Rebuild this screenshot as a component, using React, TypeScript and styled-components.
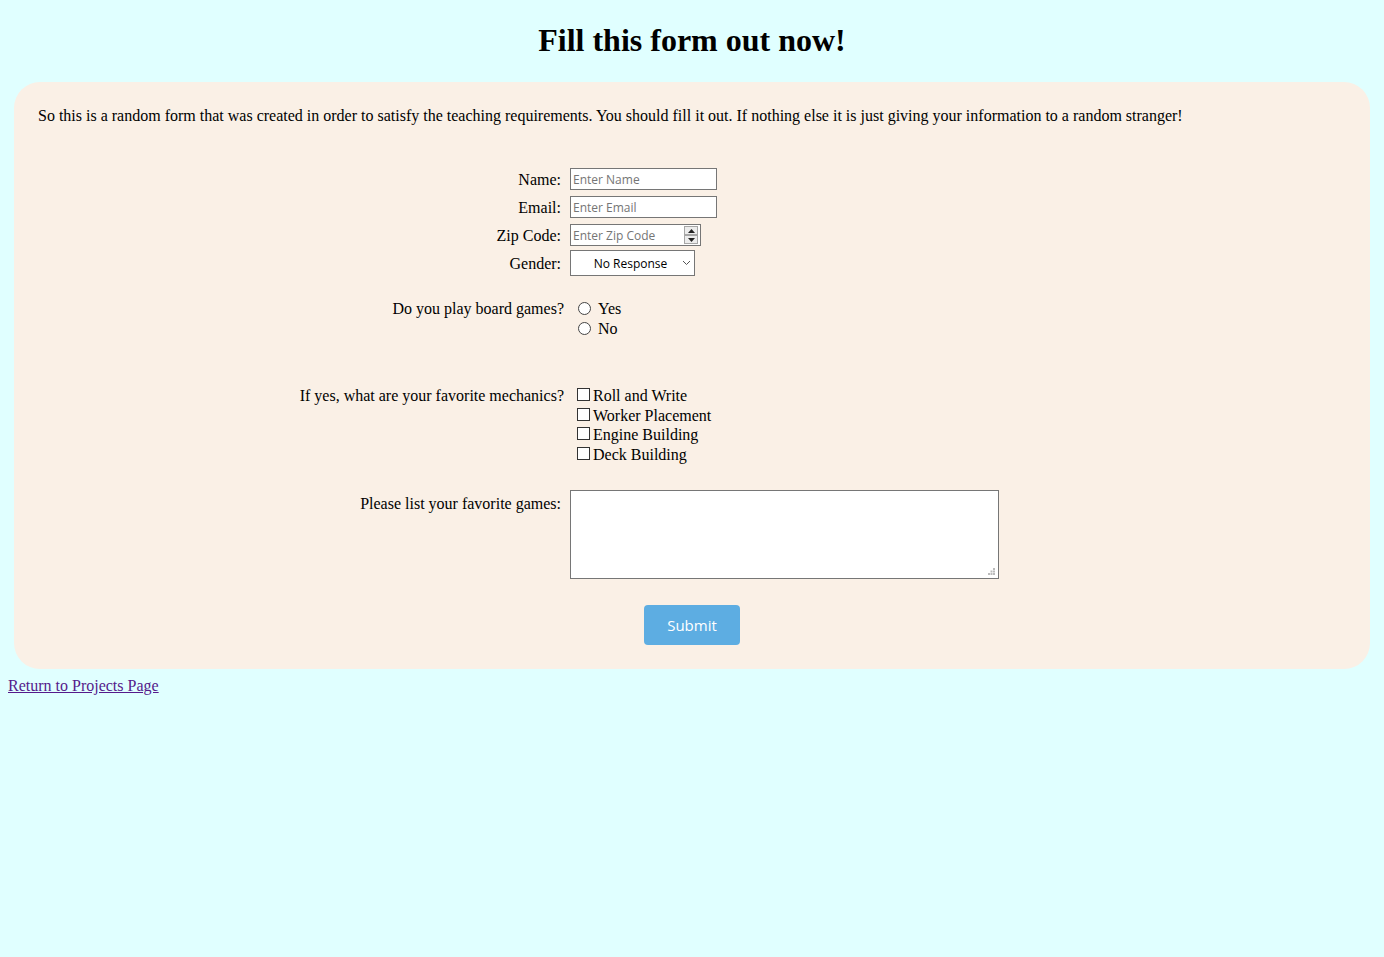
import React from "react";
import styled, { createGlobalStyle } from "styled-components";

const Global = createGlobalStyle`
  html, body { margin: 0; padding: 0; background: #e0ffff; }
  body { font-family: "Liberation Serif", "Times New Roman", serif; font-size: 16px; color: #000; }
`;

const Page = styled.div`
  padding: 0 8px;
  min-height: 957px;
  box-sizing: border-box;
`;

const Title = styled.h1`
  margin: 22px 0 23px;
  font-size: 32px;
  line-height: 37px;
  font-weight: bold;
  text-align: center;
`;

const Card = styled.div`
  margin: 0 6px;
  background: #faf0e6;
  border-radius: 26px;
  padding: 25px 24px 24px;
`;

const Intro = styled.p`
  margin: 0 0 43px;
  line-height: 18px;
`;

const Form = styled.form`
  display: flex;
  flex-direction: column;
`;

const Row = styled.div<{ $choice?: boolean; $mt?: number; $top?: boolean }>`
  display: grid;
  grid-template-columns: ${(p) => (p.$choice ? 526 : 523)}px 1fr;
  column-gap: 9px;
  align-items: ${(p) => (p.$top ? "start" : "center")};
  margin-top: ${(p) => p.$mt ?? 0}px;
`;

const Label = styled.label<{ $pt?: number }>`
  text-align: right;
  line-height: 18px;
  padding-top: ${(p) => p.$pt ?? 2}px;
`;

const TextInput = styled.input<{ $w: number }>`
  box-sizing: border-box;
  width: ${(p) => p.$w}px;
  height: 22px;
  border: 1px solid #767676;
  background: #fff;
  padding: 0 2px;
  font-family: "Open Sans", "Liberation Sans", sans-serif;
  font-size: 12px;
  color: #000;
  outline: none;
  &::placeholder { color: #757575; }
  &::-webkit-inner-spin-button, &::-webkit-outer-spin-button { -webkit-appearance: none; margin: 0; }
  -moz-appearance: textfield;
`;

const FieldWrap = styled.div`
  position: relative;
  width: max-content;
`;

const Spinner = styled.div`
  position: absolute;
  right: 3px;
  top: 2px;
  width: 14px;
  height: 18px;
  display: flex;
  flex-direction: column;
`;

const SpinBtn = styled.div`
  flex: 1;
  box-sizing: border-box;
  border: 1px solid #a6a6a6;
  background: #ececec;
  display: flex;
  align-items: center;
  justify-content: center;
`;

const SelectBox = styled.select`
  box-sizing: border-box;
  width: 125px;
  height: 26px;
  appearance: none;
  -webkit-appearance: none;
  border: 1px solid #767676;
  border-radius: 0;
  background: #fff;
  padding: 0 14px 0 10px;
  text-align: center;
  text-align-last: center;
  font-family: "Open Sans", "Liberation Sans", sans-serif;
  font-size: 12px;
  color: #000;
  outline: none;
`;

const Chevron = styled.svg`
  position: absolute;
  right: 4px;
  top: 10px;
  pointer-events: none;
`;

const Options = styled.div<{ $h: number }>`
  display: flex;
  flex-direction: column;
  & > label { height: ${(p) => p.$h}px; }
`;

const Option = styled.label`
  display: flex;
  align-items: center;
  line-height: 18px;
`;

const OptionText = styled.span`
  padding-top: 2px;
`;

const Radio = styled.input`
  appearance: none;
  -webkit-appearance: none;
  box-sizing: border-box;
  width: 13px;
  height: 13px;
  border: 1px solid #444;
  border-radius: 50%;
  background: #fff;
  margin: 0 7px 0 5px;
`;

const Check = styled.input`
  appearance: none;
  -webkit-appearance: none;
  box-sizing: border-box;
  width: 13px;
  height: 13px;
  border: 1px solid #333;
  border-radius: 0;
  background: #fff;
  margin: 0 3px 1px 4px;
`;

const TextArea = styled.textarea`
  box-sizing: border-box;
  width: 429px;
  height: 89px;
  border: 1px solid #767676;
  background: #fff;
  resize: none;
  outline: none;
  display: block;
`;

const Grip = styled.svg`
  position: absolute;
  right: 4px;
  bottom: 4px;
`;

const Submit = styled.button`
  align-self: center;
  margin-top: 26px;
  width: 96px;
  height: 40px;
  border: none;
  border-radius: 4px;
  background: #5dade2;
  color: #fff;
  font-family: "Open Sans", "Liberation Sans", sans-serif;
  font-size: 15px;
  cursor: pointer;
`;

const BackLink = styled.a`
  display: inline-block;
  margin-top: 7px;
  line-height: 18px;
  padding-top: 1px;
  color: #551a8b;
  text-decoration: underline;
`;

const Tri = ({ up }: { up?: boolean }) => (
  <svg width="7" height="4" viewBox="0 0 7 4">
    <path d={up ? "M0 4 L3.5 0 L7 4 Z" : "M0 0 L3.5 4 L7 0 Z"} fill="#222" />
  </svg>
);

const mechanics = ["Roll and Write", "Worker Placement", "Engine Building", "Deck Building"];

export default function App() {
  return (
    <Page>
      <Global />
      <Title>Fill this form out now!</Title>
      <Card>
        <Intro>
          So this is a random form that was created in order to satisfy the teaching requirements. You should fill it
          out. If nothing else it is just giving your information to a random stranger!
        </Intro>
        <Form onSubmit={(e) => e.preventDefault()}>
          <Row>
            <Label htmlFor="name">Name:</Label>
            <TextInput id="name" $w={147} placeholder="Enter Name" />
          </Row>
          <Row $mt={6}>
            <Label htmlFor="email">Email:</Label>
            <TextInput id="email" $w={147} placeholder="Enter Email" />
          </Row>
          <Row $mt={6}>
            <Label htmlFor="zip">Zip Code:</Label>
            <FieldWrap>
              <TextInput id="zip" type="number" $w={131} placeholder="Enter Zip Code" />
              <Spinner>
                <SpinBtn>
                  <Tri up />
                </SpinBtn>
                <SpinBtn>
                  <Tri />
                </SpinBtn>
              </Spinner>
            </FieldWrap>
          </Row>
          <Row $mt={4}>
            <Label htmlFor="gender">Gender:</Label>
            <FieldWrap>
              <SelectBox id="gender" defaultValue="none">
                <option value="none">No Response</option>
                <option value="male">Male</option>
                <option value="female">Female</option>
                <option value="other">Other</option>
              </SelectBox>
              <Chevron width="9" height="6" viewBox="0 0 9 6">
                <path d="M1 1 L4.5 4.5 L8 1" fill="none" stroke="#555" strokeWidth="1" />
              </Chevron>
            </FieldWrap>
          </Row>
          <Row $choice $top $mt={22}>
            <Label $pt={2}>Do you play board games?</Label>
            <Options $h={20}>
              <Option>
                <Radio type="radio" name="play" value="yes" />
                <OptionText>Yes</OptionText>
              </Option>
              <Option>
                <Radio type="radio" name="play" value="no" />
                <OptionText>No</OptionText>
              </Option>
            </Options>
          </Row>
          <Row $choice $top $mt={47}>
            <Label $pt={2}>If yes, what are your favorite mechanics?</Label>
            <Options $h={19.7}>
              {mechanics.map((m) => (
                <Option key={m}>
                  <Check type="checkbox" value={m} />
                  <OptionText>{m}</OptionText>
                </Option>
              ))}
            </Options>
          </Row>
          <Row $top $mt={26}>
            <Label htmlFor="games" $pt={5}>
              Please list your favorite games:
            </Label>
            <FieldWrap>
              <TextArea id="games" />
              <Grip width="7" height="7" viewBox="0 0 7 7">
                <rect x="5" y="0" width="2" height="2" fill="#bbb" />
                <rect x="2.5" y="2.5" width="2" height="2" fill="#bbb" />
                <rect x="5" y="2.5" width="2" height="2" fill="#bbb" />
                <rect x="0" y="5" width="2" height="2" fill="#bbb" />
                <rect x="2.5" y="5" width="2" height="2" fill="#bbb" />
                <rect x="5" y="5" width="2" height="2" fill="#bbb" />
              </Grip>
            </FieldWrap>
          </Row>
          <Submit type="submit">Submit</Submit>
        </Form>
      </Card>
      <BackLink href="#projects">Return to Projects Page</BackLink>
    </Page>
  );
}
